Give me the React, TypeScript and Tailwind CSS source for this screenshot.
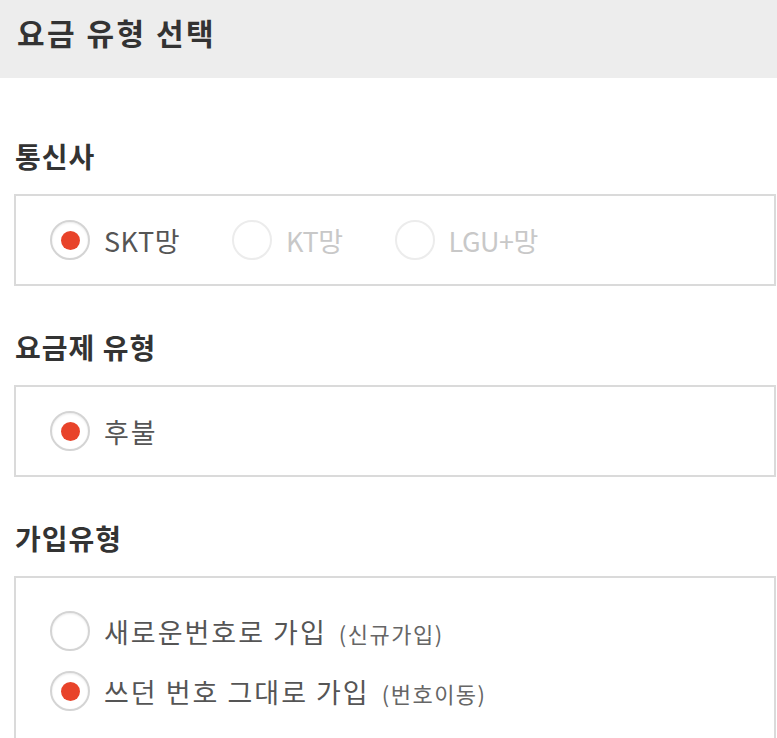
import React from "react";

interface Option {
  label: string;
  note?: string;
  checked?: boolean;
  disabled?: boolean;
}

const carriers: Option[] = [
  { label: "SKT망", checked: true },
  { label: "KT망", disabled: true },
  { label: "LGU+망", disabled: true },
];

const planTypes: Option[] = [{ label: "후불", checked: true }];

const joinTypes: Option[] = [
  { label: "새로운번호로 가입", note: "(신규가입)" },
  { label: "쓰던 번호 그대로 가입", note: "(번호이동)", checked: true },
];

function Radio({ option, wide }: { option: Option; wide?: boolean }) {
  let textClass = "text-[27px] leading-none text-[#555] tracking-[0.5px]";
  if (option.disabled) textClass = "text-[27px] leading-none text-[#c8c8c8] tracking-[-0.5px]";
  else if (wide) textClass = "text-[27px] leading-none text-[#555] tracking-[2px]";

  return (
    <label className="flex items-center gap-[14px] cursor-pointer">
      <span
        className={
          option.disabled
            ? "size-10 rounded-full border-2 border-[#ececec] bg-white flex items-center justify-center"
            : "size-10 rounded-full border-2 border-[#d4d4d4] bg-white flex items-center justify-center shadow-[inset_0_1px_2px_rgba(0,0,0,0.08)]"
        }
      >
        {option.checked && <span className="size-[19px] rounded-full bg-[#e8432a]" />}
      </span>
      <span className={textClass}>
        {option.label}
        {option.note && (
          <span className="ml-3 text-[22px] text-[#666] tracking-[1.5px]">{option.note}</span>
        )}
      </span>
    </label>
  );
}

function Section({ title, children }: { title: string; children: React.ReactNode }) {
  return (
    <section>
      <h3 className="h-10 leading-[42px] pl-[15px] text-[28px] font-bold text-[#333] tracking-[1px] mb-[19px]">
        {title}
      </h3>
      {children}
    </section>
  );
}

export default function App() {
  return (
    <div
      className="w-[777px] h-[738px] bg-white overflow-hidden"
      style={{ fontFamily: '"Noto Sans CJK KR", "Noto Sans", sans-serif' }}
    >
      {/* Page header */}
      <div className="h-[78px] bg-[#ededed] pl-[17px] pt-[10px]">
        <h2 className="text-[30px] leading-[44px] font-bold text-[#333] tracking-[2.5px]">요금 유형 선택</h2>
      </div>

      <div className="pt-[57px] flex flex-col gap-10">
        <Section title="통신사">
          <div className="ml-[14px] mr-px h-[92px] border-2 border-[#dadada] pl-[34px] flex items-center gap-[52px]">
            {carriers.map((c) => (
              <Radio key={c.label} option={c} />
            ))}
          </div>
        </Section>

        <Section title="요금제 유형">
          <div className="ml-[14px] mr-px h-[92px] border-2 border-[#dadada] pl-[34px] flex items-center">
            {planTypes.map((c) => (
              <Radio key={c.label} option={c} wide />
            ))}
          </div>
        </Section>

        {/* box runs on below the fold */}
        <Section title="가입유형">
          <div className="ml-[14px] mr-px h-[200px] border-2 border-[#dadada] pl-[34px] pt-[33px] flex flex-col gap-5">
            {joinTypes.map((c) => (
              <Radio key={c.label} option={c} wide />
            ))}
          </div>
        </Section>
      </div>
    </div>
  );
}
